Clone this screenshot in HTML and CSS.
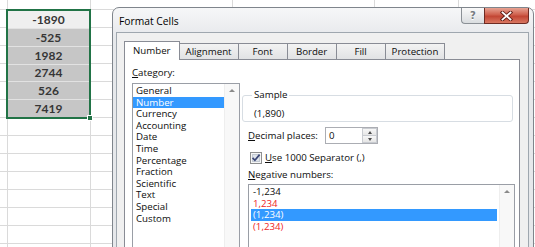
FILE: index.html
```html
<!DOCTYPE html>
<html>
<head>
<meta charset="utf-8">
<title>Format Cells</title>
<link rel="stylesheet" href="styles.css">
</head>
<body>
<div class="sheet">
  <div class="selection">
    <div class="cell active">-1890</div>
    <div class="cell">-525</div>
    <div class="cell">1982</div>
    <div class="cell">2744</div>
    <div class="cell">526</div>
    <div class="cell">7419</div>
    <span class="fill-handle"></span>
  </div>
</div>

<div class="dialog">
  <div class="titlebar">
    <span class="title">Format Cells</span>
    <div class="caption-buttons">
      <span class="btn-help">?</span>
      <span class="btn-close">
        <svg width="13" height="10" viewBox="0 0 13 10">
          <path d="M2.5 1.5 L10.5 8.5 M10.5 1.5 L2.5 8.5" stroke="#5e1d16" stroke-width="3.6" stroke-linecap="square" fill="none"/>
          <path d="M2.5 1.5 L10.5 8.5 M10.5 1.5 L2.5 8.5" stroke="#ffffff" stroke-width="1.8" stroke-linecap="square" fill="none"/>
        </svg>
      </span>
    </div>
  </div>

  <div class="client">
    <div class="tabs">
      <span class="tab active">Number</span>
      <span class="tab">Alignment</span>
      <span class="tab">Font</span>
      <span class="tab">Border</span>
      <span class="tab">Fill</span>
      <span class="tab">Protection</span>
    </div>

    <div class="page">
      <div class="col-left">
        <div class="label"><u>C</u>ategory:</div>
        <div class="listbox cat-list">
          <div class="items">
            <div class="item">General</div>
            <div class="item sel">Number</div>
            <div class="item">Currency</div>
            <div class="item">Accounting</div>
            <div class="item">Date</div>
            <div class="item">Time</div>
            <div class="item">Percentage</div>
            <div class="item">Fraction</div>
            <div class="item">Scientific</div>
            <div class="item">Text</div>
            <div class="item">Special</div>
            <div class="item">Custom</div>
          </div>
          <div class="scrollbar"><span class="arrow-up"></span></div>
        </div>
      </div>

      <div class="col-right">
        <fieldset class="sample">
          <legend>Sample</legend>
          <div class="sample-value">(1,890)</div>
        </fieldset>

        <div class="row decimal">
          <span class="row-label"><u>D</u>ecimal places:</span>
          <div class="spin">
            <span class="spin-value">0</span>
            <div class="spin-btns">
              <span class="spin-btn"><i class="tri-up"></i></span>
              <span class="spin-btn"><i class="tri-down"></i></span>
            </div>
          </div>
        </div>

        <div class="row check">
          <span class="checkbox">
            <svg width="12" height="12" viewBox="0 0 12 12">
              <rect x="0.5" y="0.5" width="11" height="11" fill="#f6f6f6" stroke="#8e8f8f"/>
              <rect x="2.5" y="2.5" width="7" height="7" fill="#dfe4ea" stroke="#c3cad2"/>
              <path d="M2.6 5.8 L4.9 8.3 L9.6 2.6" fill="none" stroke="#3a4676" stroke-width="1.7"/>
            </svg>
          </span>
          <span><u>U</u>se 1000 Separator (,)</span>
        </div>

        <div class="label neg-label"><u>N</u>egative numbers:</div>
        <div class="listbox neg-list">
          <div class="items">
            <div class="item">-1,234</div>
            <div class="item red">1,234</div>
            <div class="item sel">(1,234)</div>
            <div class="item red">(1,234)</div>
          </div>
          <div class="scrollbar"><span class="arrow-up"></span></div>
        </div>
      </div>
    </div>
  </div>
</div>
</body>
</html>
```

FILE: styles.css
```css
* { box-sizing: border-box; }

html, body {
  margin: 0;
  padding: 0;
}

body {
  width: 535px;
  height: 247px;
  overflow: hidden;
  position: relative;
  background: #fff;
  font-family: "Open Sans", "Noto Sans", sans-serif;
  font-size: 9.7px;
  color: #0d0d0d;
}

/* ---------- spreadsheet ---------- */
.sheet {
  height: 247px;
  padding: 9px 0 0 6px;
  background-color: #fff;
  background-image:
    linear-gradient(to right,
      transparent 7px, #dadada 7px 8px,
      transparent 8px 90px, #dadada 90px 91px,
      transparent 91px 232px, #dadada 232px 233px,
      transparent 233px 374px, #dadada 374px 375px,
      transparent 375px 458px, #dadada 458px 459px,
      transparent 459px),
    repeating-linear-gradient(to bottom, #dadada 0 1px, transparent 1px 18px);
  background-position: 0 0, 0 9px;
}

.selection {
  position: relative;
  width: 85px;
  height: 110px;
  border: 2px solid #217346;
  display: grid;
  grid-template-rows: repeat(6, 1fr);
  row-gap: 1px;
  background: #e2e2e2;
}

.cell {
  display: flex;
  align-items: center;
  justify-content: center;
  background: #c6c6c6;
  font-family: Lato, "Open Sans", sans-serif;
  font-weight: 700;
  font-size: 12px;
  color: #363636;
}

.cell.active {
  background: #efefef;
}

.fill-handle {
  position: absolute;
  right: -4px;
  bottom: -4px;
  width: 6px;
  height: 6px;
  background: #217346;
  border: 1px solid #fff;
}

/* ---------- dialog ---------- */
.dialog {
  position: absolute;
  left: 112px;
  top: 7px;
  width: 422px;
  height: 262px;
  border: 1px solid #7f858c;
  border-radius: 7px 7px 0 0;
  background: linear-gradient(#f6f7f8, #e6e8eb 30px, #e6e8eb);
  padding: 0 4px 0 3px;
  display: flex;
  flex-direction: column;
}

.titlebar {
  height: 24px;
  display: flex;
  justify-content: space-between;
  align-items: flex-start;
  flex: none;
}

.title {
  margin: 6px 0 0 3px;
  line-height: 14px;
  font-size: 10.3px;
  color: #000;
}

.caption-buttons {
  display: flex;
}

.btn-help {
  width: 23px;
  height: 16px;
  border: 1px solid #8b9096;
  border-top: none;
  border-right: none;
  border-radius: 0 0 0 4px;
  background: linear-gradient(#f9f9f9, #dadde0);
  display: flex;
  align-items: center;
  justify-content: center;
  font-family: "DejaVu Sans", sans-serif;
  font-size: 10px;
  font-weight: 700;
  color: #767b81;
  text-shadow: 0 1px 0 #fff;
}

.btn-close {
  width: 45px;
  height: 16px;
  border: 1px solid #6d2b23;
  border-top: none;
  border-radius: 0 0 4px 0;
  background: linear-gradient(#e7a393, #cf5f4c 45%, #c24634 55%, #d97761);
  display: flex;
  align-items: center;
  justify-content: center;
}

.client {
  flex: 1;
  border: 1px solid #9fa7af;
  border-bottom: none;
  background: #f0f0f0;
  padding: 8px 8px 0 7px;
  display: flex;
  flex-direction: column;
}

/* tabs */
.tabs {
  display: flex;
  align-items: flex-end;
  height: 18px;
  flex: none;
}

.tab {
  height: 16px;
  min-width: 50px;
  padding: 0 6px;
  margin-right: -1px;
  border: 1px solid #898c95;
  border-bottom: none;
  background: linear-gradient(#f3f3f3, #e1e2e4);
  line-height: 15px;
  text-align: center;
}

.tab.active {
  position: relative;
  z-index: 1;
  height: 19px;
  margin-bottom: -1px;
  padding: 0 8px;
  background: #fff;
  line-height: 17px;
}

/* page */
.page {
  flex: 1;
  display: flex;
  gap: 2px;
  padding: 7px 4px 0 7px;
  background: #fff;
  border: 1px solid #898c95;
  border-bottom: none;
}

.label {
  line-height: 12px;
  height: 12px;
}

.col-left {
  width: 108px;
  flex: none;
}

.listbox {
  display: flex;
  border: 1px solid #9a9ea6;
  background: #fff;
}

.cat-list {
  margin-top: 4px;
  height: 200px;
}

.items {
  flex: 1;
  padding-top: 1px;
}

.item {
  line-height: 11.6px;
  height: 11.6px;
  padding-left: 3px;
  white-space: nowrap;
}

.item.sel {
  background: #3399ff;
  color: #fff;
}

.item.red {
  color: #ee1c24;
}

.scrollbar {
  width: 15px;
  flex: none;
  background: #f8f8f8;
  border-left: 1px solid #eeeeee;
  display: flex;
  justify-content: center;
  padding-top: 5px;
}

.arrow-up {
  width: 0;
  height: 0;
  border-left: 3px solid transparent;
  border-right: 3px solid transparent;
  border-bottom: 3px solid #8a8a8a;
}

.col-right {
  flex: 1;
  display: flex;
  flex-direction: column;
}

.sample {
  margin: 22px 2px 0 0;
  padding: 0 0 1px 9px;
  border: 1px solid #d7dde3;
  border-radius: 3px;
  min-width: 0;
}

.sample legend {
  padding: 0 2px;
  line-height: 12px;
}

.sample-value {
  margin: 7px 0 0 2px;
  line-height: 12px;
}

.row {
  display: flex;
  align-items: center;
}

.decimal {
  margin-top: 5px;
  height: 17px;
  padding-left: 6px;
}

.row-label {
  width: 77px;
  flex: none;
}

.spin {
  display: flex;
  width: 53px;
  height: 17px;
  border: 1px solid #abadb3;
  background: #fff;
}

.spin-value {
  flex: 1;
  padding-left: 3px;
  line-height: 15px;
}

.spin-btns {
  width: 15px;
  display: flex;
  flex-direction: column;
}

.spin-btn {
  flex: 1;
  display: flex;
  align-items: center;
  justify-content: center;
  border: 1px solid #c9ccd1;
  background: linear-gradient(#f7f7f7, #e6e6e6);
}

.spin-btn + .spin-btn {
  border-top: none;
}

.tri-up, .tri-down {
  width: 0;
  height: 0;
  border-left: 2.5px solid transparent;
  border-right: 2.5px solid transparent;
}

.tri-up { border-bottom: 3px solid #4d4d4d; }
.tri-down { border-top: 3px solid #4d4d4d; }

.check {
  margin-top: 7px;
  height: 13px;
  padding-left: 8px;
  gap: 3px;
}

.checkbox {
  display: flex;
}

.neg-label {
  margin: 5px 0 0 6px;
}

.neg-list {
  margin: 3px 0 0 6px;
  height: 80px;
}

.neg-list .items {
  padding: 1px 2px 0 2px;
}

.neg-list .item {
  padding-left: 2px;
}
```
